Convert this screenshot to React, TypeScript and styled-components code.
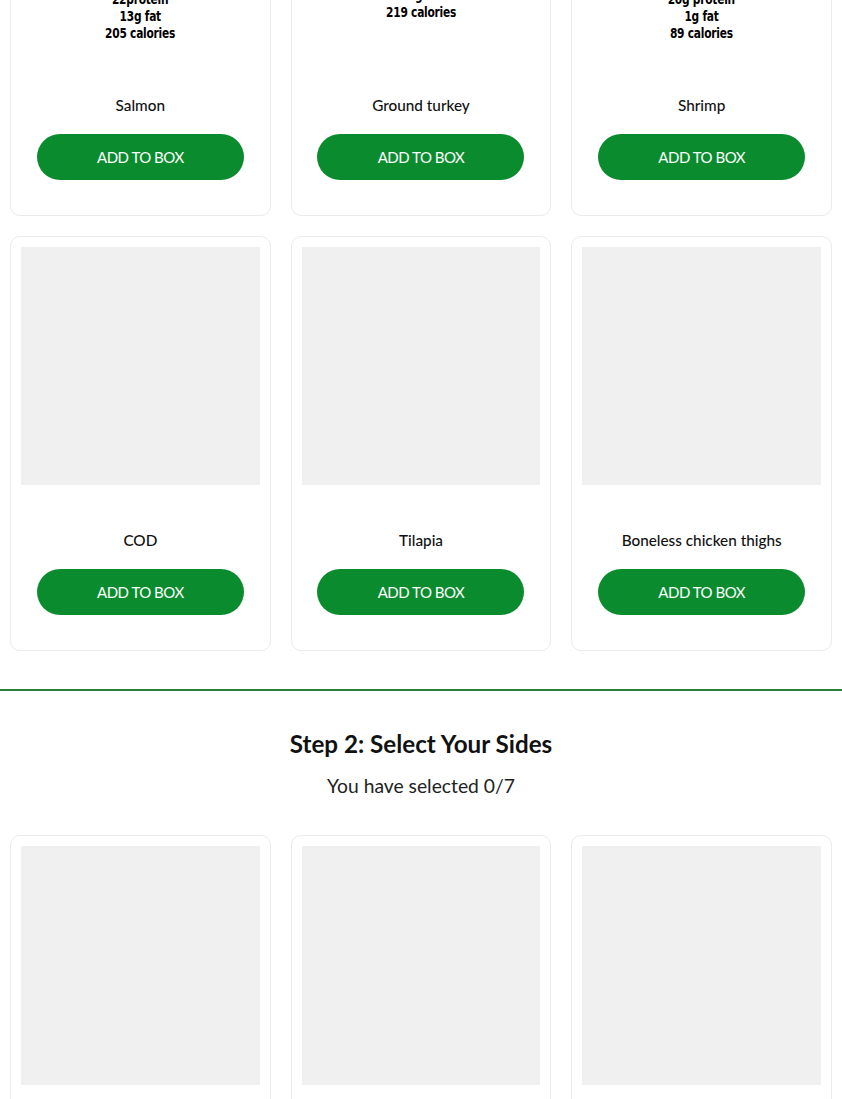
import styled, { createGlobalStyle } from "styled-components"

const GlobalStyle = createGlobalStyle`
body {
  margin: 0;
  background: #fff;
  font-family: Lato, "Open Sans", sans-serif;
  color: #111;
}
`

type Item = { name: string; facts?: string[]; lift?: number }

const proteins: Item[] = [
  { name: "Salmon", facts: ["22protein", "13g fat", "205 calories"], lift: 8 },
  { name: "Ground turkey", facts: ["22g protein", "12g fat", "219 calories"], lift: 29 },
  { name: "Shrimp", facts: ["20g protein", "1g fat", "89 calories"], lift: 8 },
  { name: "COD" },
  { name: "Tilapia" },
  { name: "Boneless chicken thighs" },
]

const sides: Item[] = [{ name: "Brown rice" }, { name: "Sweet potato" }, { name: "Broccoli" }]

const Card = ({ item }: { item: Item }) => {
  return (
    <CardBox>
      <Photo $filled={!!item.facts} $lift={item.lift || 0}>
        {item.facts && item.facts.map((f) => <Fact key={f}>{f}</Fact>)}
      </Photo>
      <Name>{item.name}</Name>
      <AddButton>ADD TO BOX</AddButton>
    </CardBox>
  )
}

const App = () => {
  return (
    <Page>
      <GlobalStyle />
      <Grid>
        {proteins.map((p) => (
          <Card key={p.name} item={p} />
        ))}
      </Grid>
      <Divider />
      <StepHead>
        <StepTitle>Step 2: Select Your Sides</StepTitle>
        <StepCount>You have selected 0/7</StepCount>
      </StepHead>
      <Grid>
        {sides.map((p) => (
          <Card key={p.name} item={p} />
        ))}
      </Grid>
    </Page>
  )
}

export default App

const Page = styled.div`
width: 100%;
margin-top: -200px;
`
const Grid = styled.div`
display: grid;
grid-template-columns: repeat(3, 1fr);
gap: 20px 20px;
padding: 0 10px;
`
const CardBox = styled.div`
border: 1px solid #ebebeb;
border-radius: 10px;
padding: 10px 10px 35px;
display: flex;
flex-direction: column;
align-items: center;
background: #fff;
`
const Photo = styled.div<{ $filled: boolean; $lift: number }>`
width: 100%;
aspect-ratio: 1 / 1;
background: ${(p) => (p.$filled ? "#fff" : "#f0f0f0")};
display: flex;
flex-direction: column;
justify-content: flex-end;
align-items: center;
padding-bottom: ${(p) => p.$lift}px;
box-sizing: border-box;
`
const Fact = styled.div`
font-family: "DejaVu Sans", sans-serif;
font-weight: 700;
font-size: 14px;
line-height: 17px;
letter-spacing: -0.3px;
transform: scaleX(0.76);
white-space: nowrap;
color: #000;
`
const Name = styled.div`
margin-top: 45px;
font-size: 15.3px;
line-height: 20px;
font-weight: 500;
color: #111;
`
const AddButton = styled.div`
margin-top: 19px;
width: 207px;
height: 46px;
border-radius: 23px;
background: #0a8c2e;
color: #fff;
display: flex;
justify-content: center;
align-items: center;
font-size: 15px;
letter-spacing: -0.5px;
cursor: pointer;
`
const Divider = styled.div`
margin-top: 38px;
height: 2px;
background: #2b7d39;
`
const StepHead = styled.div`
display: flex;
flex-direction: column;
align-items: center;
padding: 37px 0 36px;
`
const StepTitle = styled.div`
font-size: 24.2px;
font-weight: 700;
line-height: 32px;
color: #111;
`
const StepCount = styled.div`
margin-top: 13px;
font-size: 19.3px;
line-height: 26px;
color: #222;
`
